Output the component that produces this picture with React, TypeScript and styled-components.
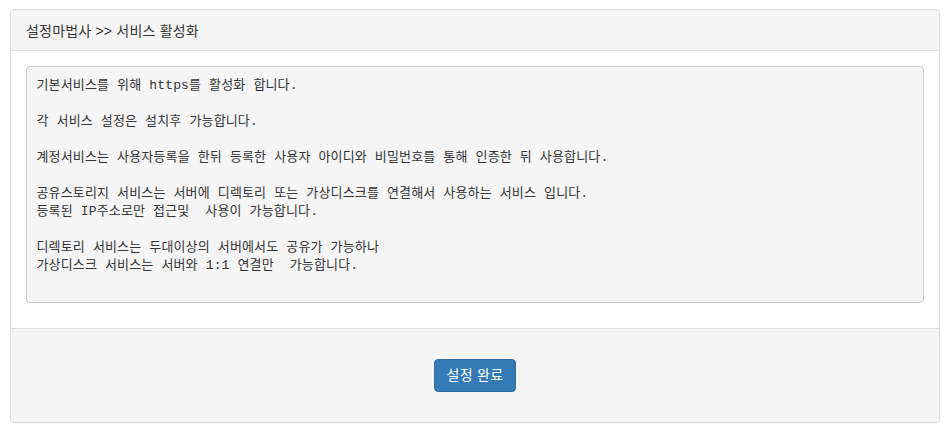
import styled, { createGlobalStyle } from "styled-components";

const GlobalStyle = createGlobalStyle`
    html, body {
        margin: 0;
        padding: 0;
        background: #ffffff;
    }
    body {
        font-family: "Liberation Sans", "Noto Sans CJK KR", sans-serif;
        font-size: 14px;
        color: #333333;
    }
`

const guideLines: string[] = [
    "기본서비스를 위해 https를 활성화 합니다.",
    "",
    "각 서비스 설정은 설치후 가능합니다.",
    "",
    "계정서비스는 사용자등록을 한뒤 등록한 사용자 아이디와 비밀번호를 통해 인증한 뒤 사용합니다.",
    "",
    "공유스토리지 서비스는 서버에 디렉토리 또는 가상디스크를 연결해서 사용하는 서비스 입니다.",
    "등록된 IP주소로만 접근및  사용이 가능합니다.",
    "",
    "디렉토리 서비스는 두대이상의 서버에서도 공유가 가능하나",
    "가상디스크 서비스는 서버와 1:1 연결만  가능합니다.",
    "",
];

export default function App() {
    return (
        <>
            <GlobalStyle />
            <Page>
                <Panel>
                    <PanelHeading>설정마법사 &gt;&gt; 서비스 활성화</PanelHeading>
                    <PanelBody>
                        <Pre>
                            {guideLines.map((line, index) => (
                                <PreLine key={index}>{line}</PreLine>
                            ))}
                        </Pre>
                    </PanelBody>
                    <PanelFooter>
                        <PrimaryButton type="button">설정 완료</PrimaryButton>
                    </PanelFooter>
                </Panel>
            </Page>
        </>
    )
}

const Page = styled.div`
    padding: 9px 9px 9px 10px;
`

const Panel = styled.div`
    border: 1px solid #dddddd;
    border-radius: 4px;
    background: #ffffff;
    box-shadow: 0 1px 1px rgba(0, 0, 0, 0.05);
    overflow: hidden;
`

const PanelHeading = styled.div`
    padding: 11px 15px 9px 15px;
    line-height: 20px;
    font-size: 14px;
    letter-spacing: 0.2px;
    color: #333333;
    background: #f5f5f5;
    border-bottom: 1px solid #dddddd;
`

const PanelBody = styled.div`
    padding: 15px;
`

const Pre = styled.div`
    margin: 0 0 10px 0;
    padding: 9.5px;
    background: #f5f5f5;
    border: 1px solid #cccccc;
    border-radius: 4px;
    color: #333333;
    font-family: "Liberation Mono", "Noto Sans CJK KR", monospace;
    font-size: 13px;
    letter-spacing: 0.15px;
    line-height: 18px;
`

const PreLine = styled.div`
    white-space: pre;
    min-height: 18px;
`

const PanelFooter = styled.div`
    display: flex;
    justify-content: center;
    padding: 30px 15px 30px 15px;
    background: #f5f5f5;
    border-top: 1px solid #dddddd;
`

const PrimaryButton = styled.button`
    padding: 6px 12px;
    font-family: "Liberation Sans", "Noto Sans CJK KR", sans-serif;
    font-size: 14px;
    letter-spacing: 0.3px;
    line-height: 19px;
    color: #ffffff;
    background: #337ab7;
    border: 1px solid #2e6da4;
    border-radius: 4px;
    cursor: pointer;
`
